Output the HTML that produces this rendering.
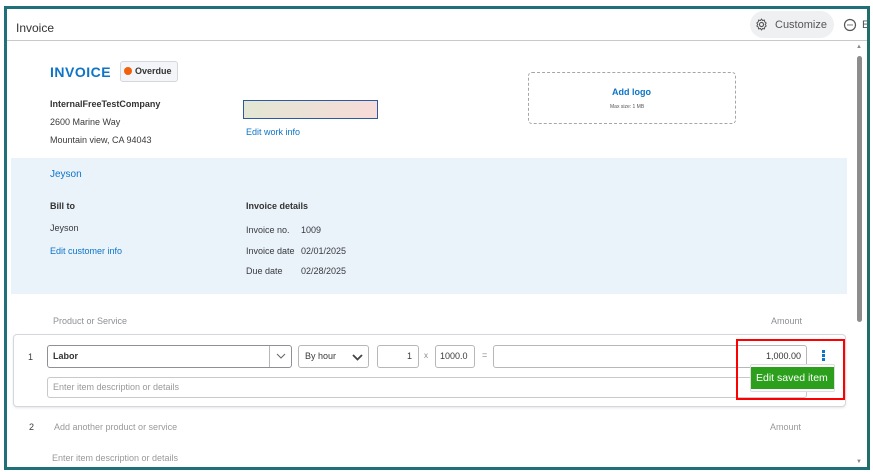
<!DOCTYPE html>
<html><head><style>
*{margin:0;padding:0;box-sizing:border-box}
body{width:873px;height:472px;background:#fff;position:relative;overflow:hidden;font-family:"Liberation Sans",Arial,sans-serif;color:#393a3d}
.a{position:absolute;white-space:nowrap}
.frame{position:absolute;left:4px;top:6px;width:866px;height:464px;border:3px solid #1f7078;border-right-color:#1f6e68}
.s{font-size:9px}
.lnk{color:#0d74c7}
.box{position:absolute;border:1px solid #b5b7bb;border-radius:3px;background:#fff}
</style></head><body>
<div class="a" style="left:16px;top:21px;font-size:12px;color:#333">Invoice</div>
<div class="a" style="left:7px;top:40px;width:860px;height:1px;background:#c8c9cb"></div>
<div class="a" style="left:750px;top:11px;width:84px;height:27px;border-radius:14px;background:#eff0f2"></div>
<svg class="a" style="left:755px;top:18px" width="13" height="13" viewBox="0 0 14 14"><circle cx="7" cy="7" r="2.2" fill="none" stroke="#555" stroke-width="1.2"/><path d="M7 1.2l1.2 1.5 1.9-.4.4 1.9 1.5 1.2-.9 1.6.9 1.6-1.5 1.2-.4 1.9-1.9-.4L7 12.8l-1.2-1.5-1.9.4-.4-1.9-1.5-1.2.9-1.6-.9-1.6 1.5-1.2.4-1.9 1.9.4z" fill="none" stroke="#555" stroke-width="1.1"/></svg>
<div class="a" style="left:775px;top:19px;font-size:11px;color:#555">Customize</div>
<svg class="a" style="left:843px;top:18px" width="14" height="14"><circle cx="7" cy="7" r="5.5" fill="none" stroke="#555" stroke-width="1.2"/><circle cx="5" cy="7" r=".7" fill="#555"/><circle cx="7" cy="7" r=".7" fill="#555"/><circle cx="9" cy="7" r=".7" fill="#555"/></svg>
<div class="a" style="left:862px;top:19px;font-size:11px;color:#555">E</div>
<div class="frame"></div>
<!-- scrollbar -->
<div class="a" style="left:857px;top:56px;width:5px;height:266px;border-radius:3px;background:#8d8d8d"></div>
<div class="a" style="left:856px;top:44px;font-size:6px;color:#888">▲</div>
<div class="a" style="left:856px;top:459px;font-size:6px;color:#888">▼</div>

<div class="a" style="left:50px;top:64px;font-size:14px;font-weight:bold;color:#0d74c7;letter-spacing:.5px">INVOICE</div>
<div class="a" style="left:120px;top:61px;width:58px;height:21px;border:1px solid #d4d7dc;border-radius:3px;background:#f4f5f8"></div>
<div class="a" style="left:124px;top:67px;width:8px;height:8px;border-radius:50%;background:#f2600c"></div>
<div class="a" style="left:135px;top:66px;font-size:9px;font-weight:bold;color:#333">Overdue</div>
<div class="a s" style="left:50px;top:99px;font-weight:bold;color:#333">InternalFreeTestCompany</div>
<div class="a s" style="left:50px;top:117px">2600 Marine Way</div>
<div class="a s" style="left:50px;top:135px">Mountain view, CA 94043</div>
<div class="a" style="left:243px;top:100px;width:135px;height:19px;border:1px solid #2c5aa0;background:linear-gradient(90deg,#e3e6d4,#f7dbd8)"></div>
<div class="a s lnk" style="left:246px;top:127px">Edit work info</div>
<div class="a" style="left:528px;top:72px;width:208px;height:52px;border:1px dashed #a6a6a6;border-radius:4px"></div>
<div class="a" style="left:612px;top:87px;font-size:9px;font-weight:bold;color:#0d74c7">Add logo</div>
<div class="a" style="left:610px;top:104px;font-size:5px;color:#555">Max size: 1 MB</div>

<div class="a" style="left:11px;top:158px;width:836px;height:136px;background:#eaf2fa"></div>
<div class="a lnk" style="left:50px;top:169px;font-size:10px">Jeyson</div>
<div class="a s" style="left:50px;top:201px;font-weight:bold;color:#333">Bill to</div>
<div class="a s" style="left:50px;top:223px">Jeyson</div>
<div class="a s lnk" style="left:50px;top:246px">Edit customer info</div>
<div class="a s" style="left:246px;top:201px;font-weight:bold;color:#333">Invoice details</div>
<div class="a s" style="left:246px;top:225px">Invoice no.</div><div class="a s" style="left:301px;top:225px">1009</div>
<div class="a s" style="left:246px;top:246px">Invoice date</div><div class="a s" style="left:301px;top:246px">02/01/2025</div>
<div class="a s" style="left:246px;top:266px">Due date</div><div class="a s" style="left:301px;top:266px">02/28/2025</div>

<div class="a s" style="left:53px;top:316px;color:#8d9096">Product or Service</div>
<div class="a s" style="left:771px;top:316px;color:#8d9096">Amount</div>
<div class="a" style="left:13px;top:334px;width:833px;height:73px;border:1px solid #d4d7dc;border-radius:4px;box-shadow:0 1px 2px rgba(0,0,0,.1)"></div>
<div class="a s" style="left:28px;top:352px">1</div>
<div class="box" style="left:47px;top:345px;width:245px;height:23px;border-color:#8d9096"></div>
<div class="a" style="left:269px;top:346px;width:1px;height:21px;background:#b5b7bb"></div>
<div class="a s" style="left:53px;top:351px;font-weight:bold;color:#333">Labor</div>
<svg class="a" style="left:276px;top:353px" width="10" height="6"><path d="M1 1l4 4 4-4" fill="none" stroke="#666"/></svg>
<div class="box" style="left:298px;top:345px;width:71px;height:23px"></div>
<div class="a s" style="left:305px;top:351px">By hour</div>
<svg class="a" style="left:352px;top:354px" width="11" height="7"><path d="M1 1l4.5 4.5L10 1" fill="none" stroke="#444" stroke-width="1.8"/></svg>
<div class="box" style="left:377px;top:345px;width:42px;height:23px"></div>
<div class="a s" style="left:407px;top:351px">1</div>
<div class="a" style="left:424px;top:351px;font-size:8px;color:#888">x</div>
<div class="box" style="left:435px;top:345px;width:40px;height:23px"></div>
<div class="a s" style="left:440px;top:351px">1000.0</div>
<div class="a" style="left:482px;top:350px;font-size:9px;color:#888">=</div>
<div class="box" style="left:493px;top:345px;width:314px;height:23px"></div>
<div class="a s" style="left:766px;top:351px;color:#333">1,000.00</div>
<div class="box" style="left:47px;top:377px;width:760px;height:21px;border-color:#c8c9cb"></div>
<div class="a s" style="left:53px;top:382px;color:#999">Enter item description or details</div>
<div class="a" style="left:822px;top:350px;width:3px;height:3px;background:#0d74c7;box-shadow:0 4px 0 #0d74c7,0 8px 0 #0d74c7"></div>
<div class="a" style="left:750px;top:364px;width:85px;height:28px;background:#fff;border:1px solid #ddd;border-radius:2px"></div>
<div class="a" style="left:751px;top:367px;width:83px;height:22px;background:#2ca01c"></div>
<div class="a" style="left:756px;top:372px;font-size:10.5px;color:#fff">Edit saved item</div>
<div class="a" style="left:736px;top:339px;width:109px;height:61px;border:2px solid #f00"></div>

<div class="a s" style="left:29px;top:422px">2</div>
<div class="a s" style="left:54px;top:422px;color:#999">Add another product or service</div>
<div class="a s" style="left:770px;top:422px;color:#999">Amount</div>
<div class="a s" style="left:52px;top:453px;color:#999">Enter item description or details</div>
</body></html>
